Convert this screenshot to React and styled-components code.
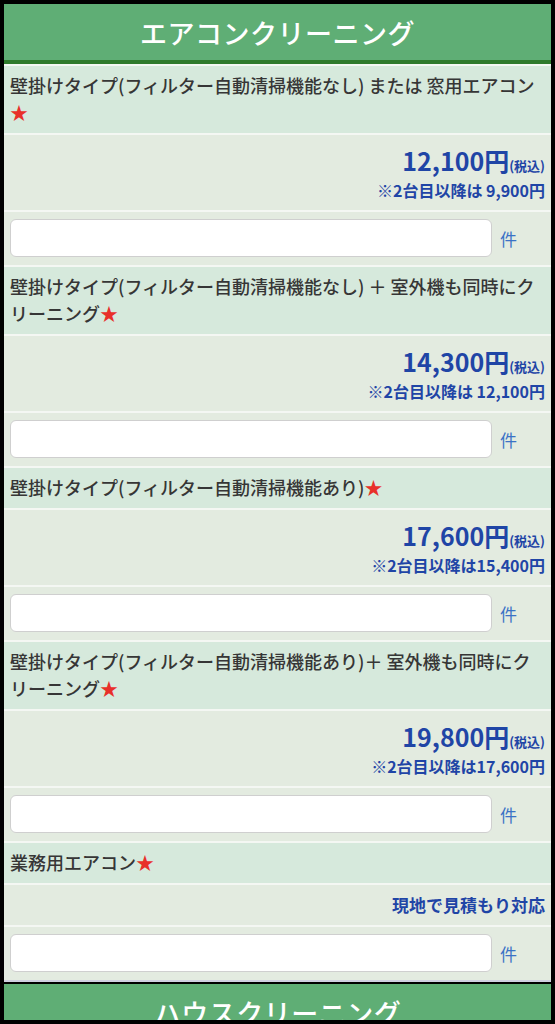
import React from "react";
import styled, { createGlobalStyle } from "styled-components";

const Global = createGlobalStyle`
  html, body { margin: 0; padding: 0; background: #000; }
  body { font-family: "Noto Sans CJK JP", "Noto Sans", sans-serif; overflow: hidden; }
  * { box-sizing: border-box; }
`;

const Frame = styled.div`
  background: #000;
  padding: 4px;
  height: 1024px;
`;

const Viewport = styled.div`
  height: 1016px;
  overflow: hidden;
`;

const Section = styled.section`
  background: #f4f7f3;
  border-bottom: 2px solid #cfd0e0;
  margin-bottom: 2px;
`;

const Header = styled.h2`
  margin: 0;
  height: 60px;
  background: #5fae75;
  border-bottom: 4px solid #2f7a2c;
  color: #fff;
  font-size: 27px;
  font-weight: 500;
  display: flex;
  align-items: center;
  justify-content: center;
  letter-spacing: 0.5px;
`;

const TitleRow = styled.div`
  margin-top: 2px;
  background: #d6e9dc;
  padding: 6px 6px 7px;
  font-size: 18px;
  font-weight: 500;
  line-height: 27px;
  color: #363636;
`;

const Star = styled.span`
  color: #e8302a;
`;

const PriceRow = styled.div`
  margin-top: 2px;
  background: #e3ebe0;
  padding: ${(p) => (p.$single ? "6px 6px" : "8px 6px 7px")};
  text-align: right;
  color: #1f45a6;
  font-weight: 700;
`;

const Price = styled.div`
  font-size: 25px;
  line-height: 34px;
  height: 34px;
`;

const Tax = styled.span`
  font-size: 13px;
  line-height: 1;
`;

const Note = styled.div`
  font-size: 16px;
  line-height: 26px;
`;

const Estimate = styled.div`
  font-size: 17px;
  line-height: 28px;
`;

const InputRow = styled.div`
  margin-top: 2px;
  background: #e3ebe0;
  padding: 7px 0 8px 6px;
  display: grid;
  grid-template-columns: 1fr 59px;
  align-items: center;
`;

const Input = styled.input`
  height: 38px;
  width: 100%;
  border: 1px solid #cfcfcf;
  border-radius: 6px;
  background: #fff;
  font-size: 16px;
  padding: 0 8px;
  outline: none;
`;

const Unit = styled.span`
  padding-left: 8px;
  color: #3b72c6;
  font-size: 17px;
`;

const items = [
  {
    title: "壁掛けタイプ(フィルター自動清掃機能なし) または 窓用エアコン",
    price: "12,100円",
    note: "※2台目以降は 9,900円",
  },
  {
    title: "壁掛けタイプ(フィルター自動清掃機能なし) ＋ 室外機も同時にクリーニング",
    price: "14,300円",
    note: "※2台目以降は 12,100円",
  },
  {
    title: "壁掛けタイプ(フィルター自動清掃機能あり)",
    price: "17,600円",
    note: "※2台目以降は15,400円",
  },
  {
    title: "壁掛けタイプ(フィルター自動清掃機能あり)＋ 室外機も同時にクリーニング",
    price: "19,800円",
    note: "※2台目以降は17,600円",
  },
  {
    title: "業務用エアコン",
    estimate: "現地で見積もり対応",
  },
];

export default function App() {
  return (
    <Frame>
      <Global />
      <Viewport>
        <Section>
          <Header>エアコンクリーニング</Header>
          {items.map((it, i) => (
            <React.Fragment key={i}>
              <TitleRow>
                {it.title}
                <Star>★</Star>
              </TitleRow>
              <PriceRow $single={!!it.estimate}>
                {it.estimate ? (
                  <Estimate>{it.estimate}</Estimate>
                ) : (
                  <>
                    <Price>
                      {it.price}
                      <Tax>(税込)</Tax>
                    </Price>
                    <Note>{it.note}</Note>
                  </>
                )}
              </PriceRow>
              <InputRow>
                <Input type="text" />
                <Unit>件</Unit>
              </InputRow>
            </React.Fragment>
          ))}
        </Section>
        <Header>ハウスクリーニング</Header>
      </Viewport>
    </Frame>
  );
}
